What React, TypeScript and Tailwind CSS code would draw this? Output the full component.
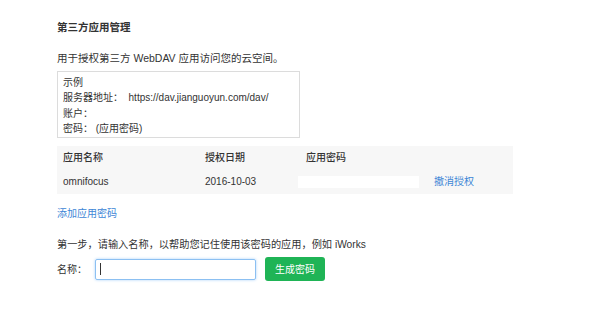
export default function App() {
  return (
    <div
      className="w-[600px] h-[325px] bg-white text-[#333] text-[10px] pl-[57px] pt-[21px]"
      style={{ fontFamily: '"Liberation Sans", "Noto Sans CJK SC", sans-serif' }}
    >
      <h2 className="font-bold text-[10.5px] leading-[12px]">第三方应用管理</h2>

      <p className="mt-[19px] text-[10.5px] leading-[12px]">用于授权第三方 WebDAV 应用访问您的云空间。</p>

      <div className="mt-[7px] w-[243px] border border-[#dcdcdc] px-[5px] pt-[3px] pb-[1px] leading-[15.3px] text-[10px]">
        <div>示例</div>
        <div>
          服务器地址：&nbsp;&nbsp;https://dav.jianguoyun.com/dav/
        </div>
        <div>账户：</div>
        <div>密码：&nbsp;(应用密码)</div>
      </div>

      <div className="mt-[8px] w-[456px] bg-[#f7f7f7]">
        <div className="flex h-[23px] items-center font-medium">
          <div className="w-[148px] pl-[6px]">应用名称</div>
          <div className="w-[93px]">授权日期</div>
          <div className="pl-[8px]">应用密码</div>
        </div>
        <div className="flex h-[25px] items-center">
          <div className="w-[148px] pl-[6px]">omnifocus</div>
          <div className="w-[93px]">2016-10-03</div>
          <div className="w-[121px] h-[12px] bg-white" />
          <a className="ml-[15px] text-[#3d86d6]">撤消授权</a>
        </div>
      </div>

      <a className="block mt-[14px] text-[#3d86d6] leading-[12px]">添加应用密码</a>

      <p className="mt-[19px] text-[10.2px] leading-[12px]">第一步，请输入名称，以帮助您记住使用该密码的应用，例如 iWorks</p>

      <div className="mt-[6px] flex items-center">
        <span className="w-[38px]">名称：</span>
        <div className="w-[161px] h-[21px] border border-[#8cc0f2] rounded-[2px] shadow-[0_0_3px_#a9d2fa] flex items-center pl-[4px]">
          <span className="w-px h-[12px] bg-[#333]" />
        </div>
        <button className="ml-[9px] w-[60px] h-[24px] rounded-[3px] bg-[#1fb456] text-white text-[10px]">
          生成密码
        </button>
      </div>
    </div>
  )
}
